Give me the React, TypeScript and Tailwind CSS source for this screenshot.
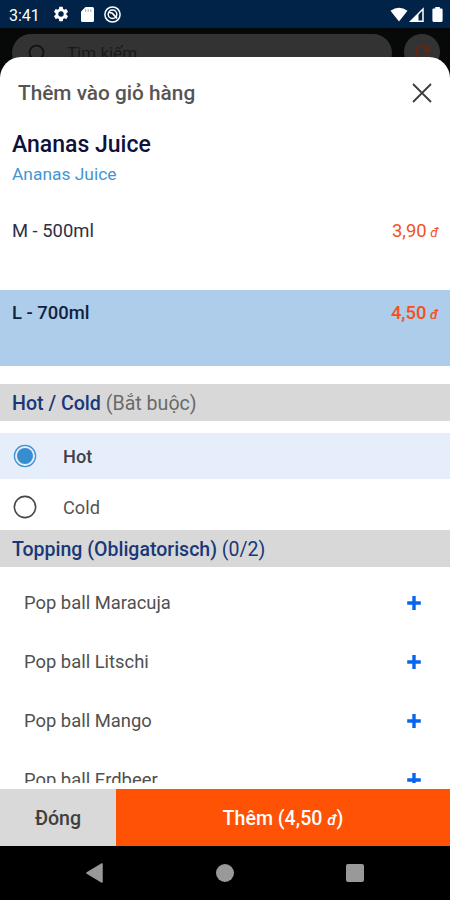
import { useState } from "react"

interface Size {
  name: string
  price: string
}

const sizes: Size[] = [
  { name: "M - 500ml", price: "3,90" },
  { name: "L - 700ml", price: "4,50" }
]

const temperatures = ["Hot", "Cold"]

const toppings = ["Pop ball Maracuja", "Pop ball Litschi", "Pop ball Mango", "Pop ball Erdbeer"]

function StatusBar() {
  return (
    <div className="flex h-7 shrink-0 items-center bg-[#002347] pl-[9px] pr-[7px] text-white">
      <span className="w-[45px] pt-[3px] text-[16px] leading-7">3:41</span>

      {/* Settings */}
      <svg className="-ml-[2px] h-[18px] w-[18px]" viewBox="0 0 24 24" fill="currentColor">
        <path d="M19.14 12.94c.04-.3.06-.61.06-.94 0-.32-.02-.64-.07-.94l2.03-1.58a.49.49 0 0 0 .12-.61l-1.92-3.32a.49.49 0 0 0-.59-.22l-2.39.96c-.5-.38-1.03-.7-1.62-.94l-.36-2.54a.48.48 0 0 0-.48-.41h-3.84c-.24 0-.43.17-.47.41l-.36 2.54c-.59.24-1.13.57-1.62.94l-2.39-.96a.48.48 0 0 0-.59.22L2.74 8.87c-.12.21-.08.47.12.61l2.03 1.58c-.05.3-.09.63-.09.94s.02.64.07.94l-2.03 1.58a.49.49 0 0 0-.12.61l1.92 3.32c.12.22.37.29.59.22l2.39-.96c.5.38 1.03.7 1.62.94l.36 2.54c.05.24.24.41.48.41h3.84c.24 0 .44-.17.47-.41l.36-2.54c.59-.24 1.13-.56 1.62-.94l2.39.96c.22.08.47 0 .59-.22l1.92-3.32a.48.48 0 0 0-.12-.61zM12 15.6a3.6 3.6 0 1 1 0-7.2 3.6 3.6 0 0 1 0 7.2z" />
      </svg>

      {/* SD card */}
      <svg className="ml-[11px] h-[15px] w-[13px]" viewBox="0 0 13 15">
        <path d="M4.5 0H11.5Q13 0 13 1.5V13.5Q13 15 11.5 15H1.5Q0 15 0 13.5V4.5Z" fill="currentColor" />
        <path d="M4.6 2.2v2.8M7.2 2.2v2.8M9.8 2.2v2.8" stroke="#9aa9ba" strokeWidth="1" />
      </svg>

      {/* Debugging badge */}
      <svg className="ml-[10px] h-[17px] w-[17px]" viewBox="0 0 17 17" fill="none" stroke="currentColor">
        <circle cx="8.5" cy="8.5" r="7.6" strokeWidth="1.5" />
        <circle cx="8.5" cy="8.3" r="4.3" strokeWidth="1.5" />
        <path d="M4.8 6.3L8.3 7.2L13 12.4" strokeWidth="1.7" />
      </svg>

      {/* Wifi, signal, battery */}
      <svg className="ml-auto h-[15px] w-[18px]" viewBox="0 0 18 15" fill="currentColor">
        <path d="M.5 3.8Q9-2.2 17.5 3.8L9 14.5Z" />
      </svg>
      <svg className="ml-[1px] h-[15px] w-[15px]" viewBox="0 0 15 15">
        <path d="M1.8 14.2L14 2V14.2Z" fill="none" stroke="currentColor" strokeWidth="1.5" />
        <path d="M1.5 14.3L9.5 6.3V14.3Z" fill="currentColor" />
      </svg>
      <svg className="ml-2 h-[15px] w-[11px]" viewBox="0 0 11 15" fill="currentColor">
        <path d="M3.2 0H7.8V1.6H9.4Q10.6 1.6 10.6 2.8V13.6Q10.6 15 9.4 15H1.6Q.4 15 .4 13.6V2.8Q.4 1.6 1.6 1.6H3.2Z" />
      </svg>
    </div>
  )
}

function DimmedSearch() {
  return (
    <div className="flex h-[50px] shrink-0 items-start gap-3 overflow-hidden bg-[#070808] pl-3 pr-2.5 pt-1.5">
      <div className="flex h-[38px] flex-1 items-center rounded-full bg-[#333] pl-4">
        <svg className="h-[19px] w-[19px]" viewBox="0 0 19 19" fill="none" stroke="#111" strokeWidth="1.7">
          <circle cx="8.5" cy="8.5" r="7" />
          <path d="M13.5 13.5L18 18" />
        </svg>
        <span className="ml-5 pt-0.5 text-[17px] text-[#191919]">Tìm kiếm</span>
      </div>
      <div className="flex h-9 w-9 items-center justify-center rounded-full bg-[#333]">
        <svg className="h-4 w-4" viewBox="0 0 16 16" fill="none" stroke="#64260f" strokeWidth="2">
          <path d="M14.5 2v5H9.5M14 6.5A6.3 6 0 1 0 14.3 9.5" />
        </svg>
      </div>
    </div>
  )
}

function PlusIcon() {
  return (
    <svg className="h-3.5 w-3.5" viewBox="0 0 14 14" stroke="#0866ee" strokeWidth="3.4">
      <path d="M7 0v14M.2 7h13.6" />
    </svg>
  )
}

function Radio({ checked }: { checked: boolean }) {
  return (
    <svg className="h-6 w-6" viewBox="0 0 24 24" fill="none">
      <circle cx="12" cy="12" r="10.6" stroke={checked ? "#3c92d2" : "#484848"} strokeWidth={checked ? 1.3 : 1.6} />
      {checked && <circle cx="12" cy="12" r="8" fill="#368dd0" />}
    </svg>
  )
}

export default function App() {
  const [size, setSize] = useState(1)
  const [temperature, setTemperature] = useState("Hot")

  return (
    <div className="flex h-[900px] w-[450px] flex-col overflow-hidden bg-black font-['Roboto','Noto_Sans',sans-serif]">
      <StatusBar />
      <DimmedSearch />

      {/* Bottom sheet */}
      <div className="relative -mt-[21px] flex min-h-0 flex-1 flex-col overflow-hidden rounded-t-[21px] bg-white">
        <div className="flex h-[72px] shrink-0 items-center justify-between px-[18px]">
          <h1 className="text-[20.8px] font-medium leading-6 text-[#555]">Thêm vào giỏ hàng</h1>
          <button aria-label="Close">
            <svg className="h-5 w-5" viewBox="0 0 20 20" stroke="#3c3c3c" strokeWidth="1.8">
              <path d="M1 1l18 18M19 1L1 19" />
            </svg>
          </button>
        </div>

        <div className="flex min-h-0 flex-1 flex-col overflow-hidden">
          <div className="h-[79px] shrink-0 px-3">
            <h2 className="pt-0.5 text-[23px] font-medium leading-7 text-[#10103c]">Ananas Juice</h2>
            <p className="pt-1 text-[17.4px] leading-[22px] text-[#4595d3]">Ananas Juice</p>
          </div>

          {/* Sizes */}
          {sizes.map((item, i) => (
            <button
              key={item.name}
              onClick={() => setSize(i)}
              className={`flex shrink-0 items-start justify-between px-3 pt-3 text-left text-[18.4px] leading-[22px] ${i === size ? "h-[76px] bg-[#adcdeb] font-medium text-[#12213f]" : "h-[82px] text-[#2e3048]"}`}
            >
              <span>{item.name}</span>
              <span className="text-[#f4511e]">
                {item.price} <span className="-ml-px text-[13.5px] italic">đ</span>
              </span>
            </button>
          ))}

          <div className="mt-[18px] h-[37px] shrink-0 bg-[#d8d8d8] px-3 text-[19.6px] leading-[39px] text-[#6a6a6a]">
            <span className="font-medium text-[#183878]">Hot / Cold</span> (Bắt buộc)
          </div>

          {/* Temperature */}
          <div className="mt-3 flex h-[97px] shrink-0 flex-col">
            {temperatures.map((name) => (
              <button
                key={name}
                onClick={() => setTemperature(name)}
                className={`flex items-center gap-[26px] pl-[13px] text-[18.2px] ${name === temperature ? "h-[46px] bg-[#e7eefb] font-medium text-[#3f4145]" : "h-[51px] pt-1 text-[#555]"}`}
              >
                <Radio checked={name === temperature} />
                <span className={name === temperature ? "pt-px" : "pt-[3px]"}>{name}</span>
              </button>
            ))}
          </div>

          <div className="h-[37px] shrink-0 bg-[#d8d8d8] px-3 text-[19.5px] leading-[39px] text-[#183878]">
            <span className="font-medium">Topping (Obligatorisch)</span> (0/2)
          </div>

          {/* Toppings */}
          <div className="min-h-0 flex-1 overflow-hidden pt-1.5">
            {toppings.map((name) => (
              <div key={name} className="flex h-[59px] items-center justify-between pl-6 pr-[29px] text-[18.4px] text-[#505050]">
                <span>{name}</span>
                <PlusIcon />
              </div>
            ))}
          </div>
        </div>

        {/* Actions */}
        <div className="mt-[6px] flex h-[57px] shrink-0 text-[19.6px] font-medium">
          <button className="w-[116px] bg-[#d9d9d9] pt-0.5 text-[#3f3f3f]">Đóng</button>
          <button className="flex-1 bg-[#ff5204] pt-0.5 text-white">
            Thêm (4,50 <span className="text-[15.5px] italic">đ</span>)
          </button>
        </div>
      </div>

      {/* Android navigation */}
      <div className="flex h-[54px] shrink-0 items-center justify-between bg-black px-[86px]">
        <svg className="h-5 w-[17px]" viewBox="0 0 17 20">
          <path d="M16 1v18L1 10Z" fill="#999" stroke="#999" strokeWidth="1.5" strokeLinejoin="round" />
        </svg>
        <div className="h-[18px] w-[18px] rounded-full bg-[#999]" />
        <div className="h-[18px] w-[18px] rounded-[2px] bg-[#999]" />
      </div>
    </div>
  )
}
